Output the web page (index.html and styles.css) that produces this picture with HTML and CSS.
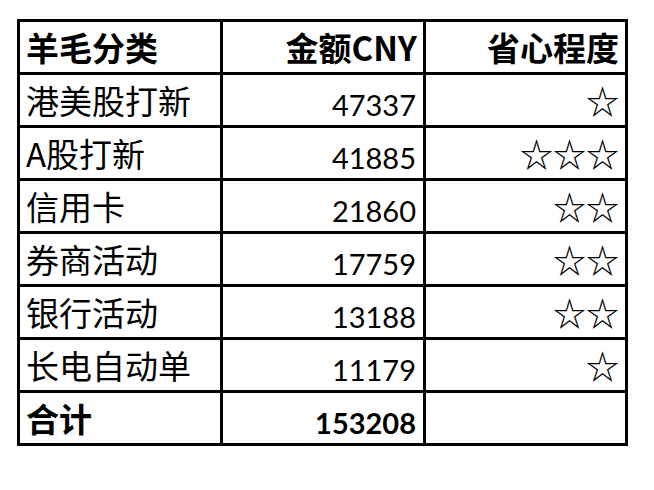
FILE: index.html
```
<!DOCTYPE html>
<html lang="zh-CN">
<head>
<meta charset="utf-8">
<link rel="stylesheet" href="styles.css">
</head>
<body>
<div class="page">
  <div class="sheet">
    <div class="cell head">羊毛分类</div>
    <div class="cell head num">金额CNY</div>
    <div class="cell head num">省心程度</div>

    <div class="cell">港美股打新</div>
    <div class="cell num amt">47337</div>
    <div class="cell num">☆</div>

    <div class="cell">A股打新</div>
    <div class="cell num amt">41885</div>
    <div class="cell num">☆☆☆</div>

    <div class="cell">信用卡</div>
    <div class="cell num amt">21860</div>
    <div class="cell num">☆☆</div>

    <div class="cell">券商活动</div>
    <div class="cell num amt">17759</div>
    <div class="cell num">☆☆</div>

    <div class="cell">银行活动</div>
    <div class="cell num amt">13188</div>
    <div class="cell num">☆☆</div>

    <div class="cell">长电自动单</div>
    <div class="cell num amt">11179</div>
    <div class="cell num">☆</div>

    <div class="cell head">合计</div>
    <div class="cell head num amt">153208</div>
    <div class="cell"></div>
  </div>
</div>
</body>
</html>
```

FILE: styles.css
```
html, body {
  margin: 0;
  padding: 0;
  background: #fff;
}

.page {
  padding: 19px 0 0 17px;
}

.sheet {
  display: inline-grid;
  grid-template-columns: 200px 200px 199px;
  grid-auto-rows: 50px;
  gap: 3px;
  padding: 3px;
  background: #000;
  font-family: "Noto Sans CJK SC", "Noto Sans", sans-serif;
  font-size: 33px;
  color: #000;
}

.cell {
  background: #fff;
  padding: 0 6px;
  line-height: 50px;
  white-space: nowrap;
  overflow: hidden;
}

.head {
  font-weight: 700;
}

.num {
  text-align: right;
}

.amt {
  font-family: Lato, "Noto Sans CJK SC", sans-serif;
  font-size: 29px;
  line-height: 60px;
  padding-right: 7px;
}
```
